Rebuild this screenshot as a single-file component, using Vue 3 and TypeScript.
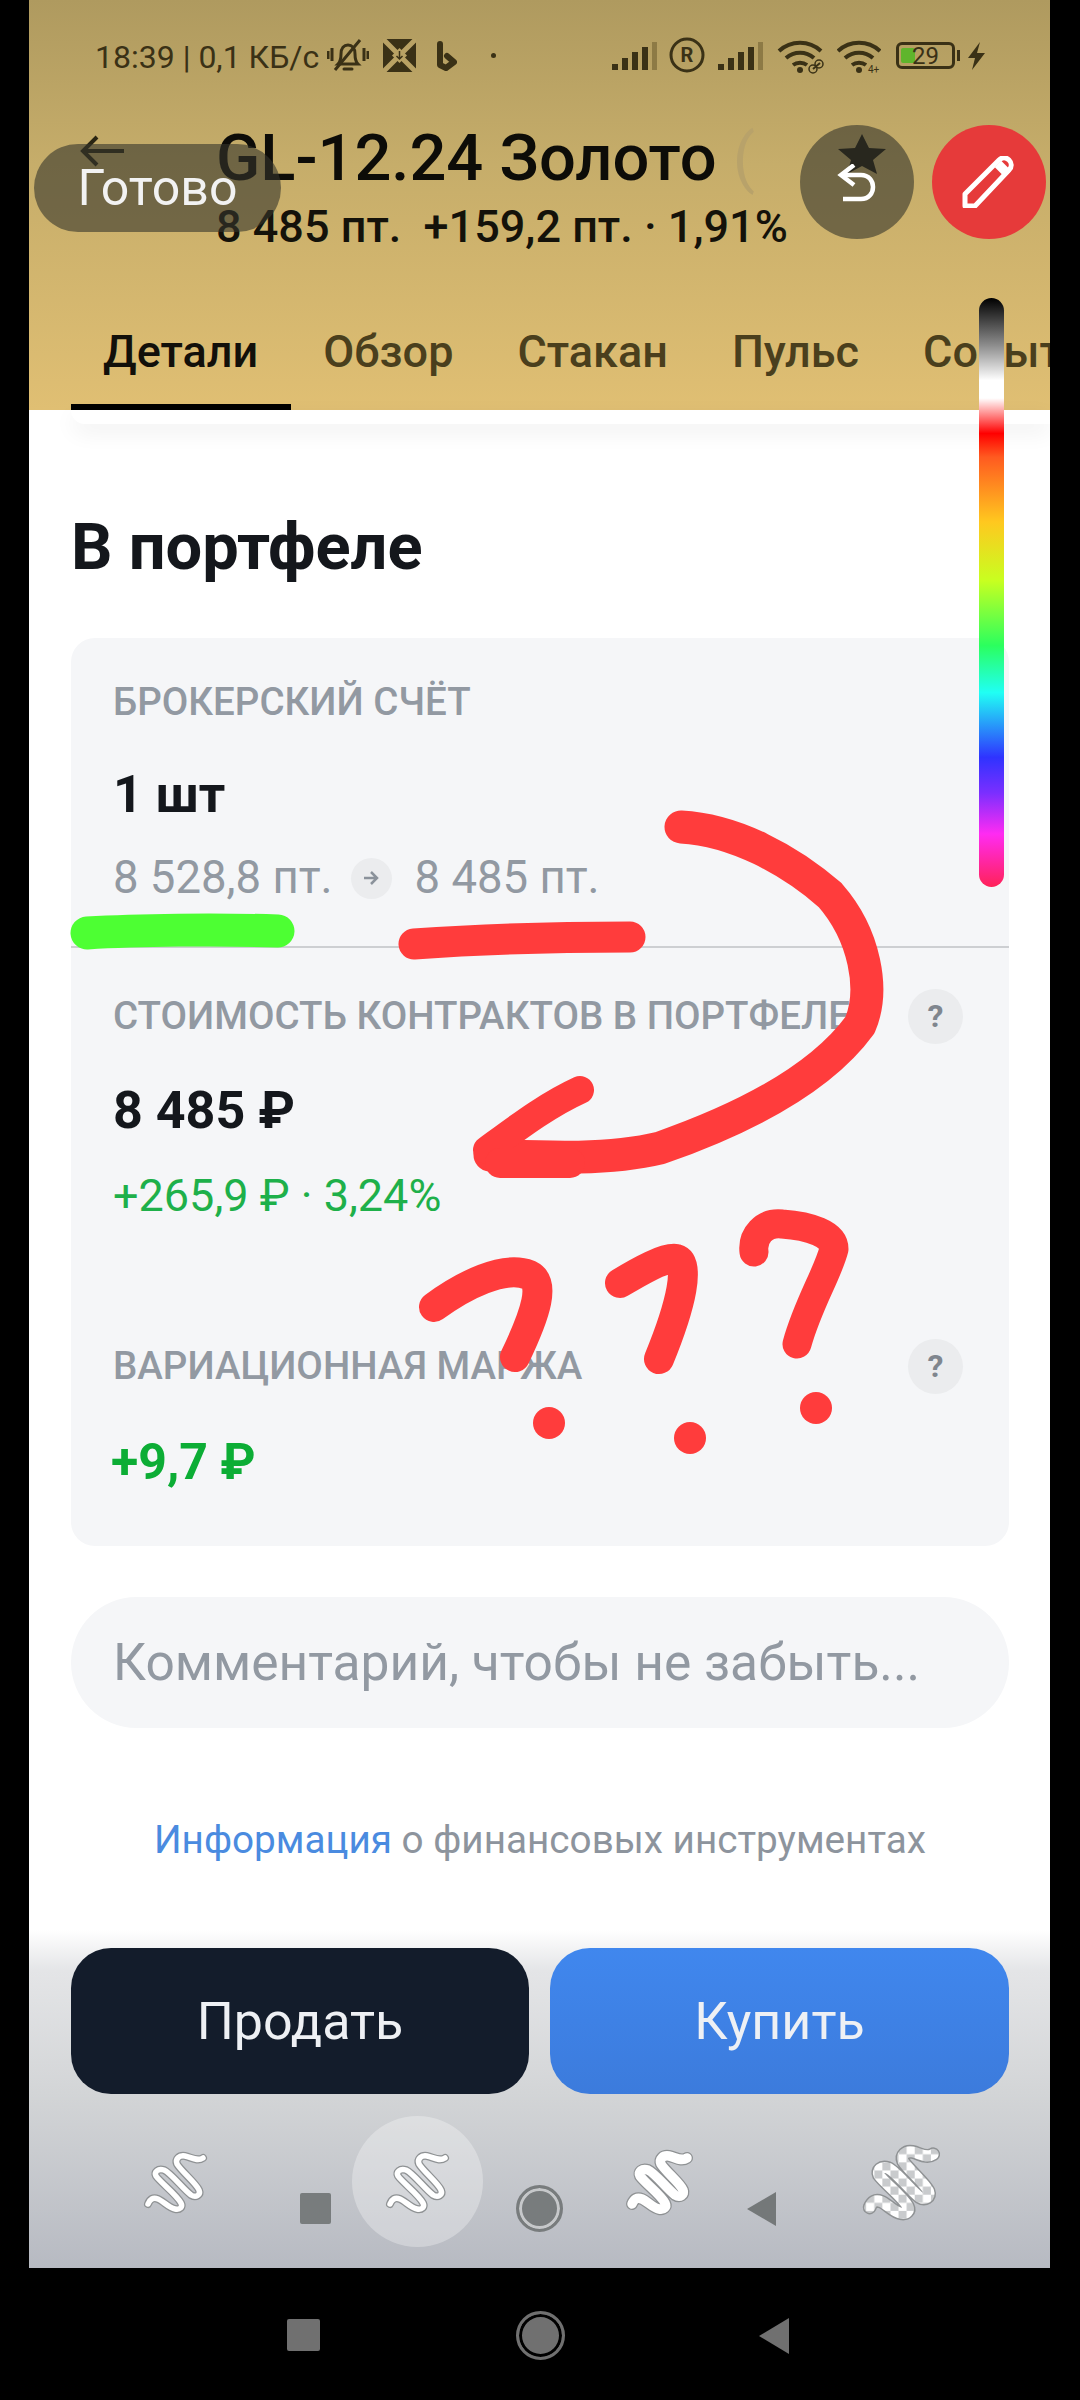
<template>
  <div class="phone">
    <div class="screen">
      <header class="head">
        <div class="status">
          <span class="clock">18:39 | 0,1 КБ/с</span>
          <svg class="st-ic bell" width="42" height="36" viewBox="0 0 42 36" fill="none" stroke="#3a3116" stroke-width="3"><path d="M11 27c2-2 3-5 3-10 0-6 3-9 7-9s7 3 7 9c0 5 1 8 3 10z"/><path d="M17 32h8" stroke-linecap="round"/><path d="M1 14v8M5 11v13M37 11v13M41 14v8M8 33 33 3"/></svg>
          <svg class="st-ic box" width="33" height="33" viewBox="0 0 33 33"><rect width="33" height="33" rx="2" fill="#3a3116"/><path d="M0 0 33 33M33 0 0 33" stroke="#b9a264" stroke-width="5"/><path d="M16.500 9 24 16.500 16.500 24 9 16.500z" fill="#b9a264"/><path d="M16.500 12v7M13.500 17l3 3 3-3" stroke="#3a3116" stroke-width="1.500" fill="none"/></svg>
          <svg class="st-ic bing" width="21" height="30" viewBox="0 0 21 30" fill="none" stroke="#3a3116" stroke-width="6" stroke-linecap="round" stroke-linejoin="round"><path d="M4 3v21l6 3 8-6-7-6"/></svg>
          <i class="st-dot"></i>
          <svg class="st-ic sig" width="46" height="28" viewBox="0 0 46 28"><g fill="#3a3116"><rect y="22" width="6" height="6"/><rect x="10" y="16" width="6" height="12"/><rect x="20" y="10" width="6" height="18"/><rect x="30" y="5" width="6" height="23"/></g><rect x="40" width="5" height="28" fill="#8d7a45"/></svg>
          <svg class="st-ic reg" width="36" height="36" viewBox="0 0 36 36" fill="none"><circle cx="18" cy="18" r="16" stroke="#3a3116" stroke-width="3"/><text x="18" y="25" text-anchor="middle" font-family="Roboto, sans-serif" font-size="20" font-weight="700" fill="#3a3116">R</text></svg>
          <svg class="st-ic sig2" width="46" height="28" viewBox="0 0 46 28"><g fill="#3a3116"><rect y="22" width="6" height="6"/><rect x="10" y="16" width="6" height="12"/><rect x="20" y="10" width="6" height="18"/><rect x="30" y="5" width="6" height="23"/></g><rect x="40" width="5" height="28" fill="#8d7a45"/></svg>
          <svg class="st-ic wifi" width="48" height="34" viewBox="0 0 48 34" fill="none" stroke="#3a3116" stroke-width="4"><path d="M2 11c12-11 30-11 42 0M9 18c8-7 20-7 28 0M16 25c4-3 10-3 14 0"/><circle cx="23" cy="30" r="3" fill="#3a3116" stroke="none"/><path d="M36 29l7-6" stroke-width="2"/><circle cx="42" cy="24" r="4" stroke-width="1.500"/><circle cx="36" cy="29" r="4" stroke-width="1.500"/></svg>
          <svg class="st-ic wifi2" width="44" height="34" viewBox="0 0 44 34" fill="none" stroke="#3a3116" stroke-width="4"><path d="M1 11c12-11 30-11 42 0M8 18c8-7 20-7 28 0M15 25c4-3 10-3 14 0"/><circle cx="22" cy="30" r="3" fill="#3a3116" stroke="none"/><text x="31" y="33" font-family="Roboto, sans-serif" font-size="10" fill="#3a3116" stroke="none">4+</text></svg>
          <div class="batt"><i class="batt-fill"></i><span>29</span></div>
          <i class="batt-nub"></i>
          <svg class="st-ic bolt" width="17" height="28" viewBox="0 0 17 28"><path d="M12 0 0 16h7L4 28l13-17H9z" fill="#3a3116"/></svg>
        </div>
        <div class="title-row">
          <svg class="back" width="44" height="32" viewBox="0 0 44 32" fill="none" stroke="#2a2512" stroke-width="4"><path d="M44 16H3M17 2 3 16l14 14"/></svg>
          <div class="title-col">
            <div class="title">GL-12.24 Золото <span class="paren">(</span></div>
            <div class="sub">8 485 пт.&nbsp; +159,2 пт. · 1,91%</div>
          </div>
        </div>
        <nav class="tabs">
          <span v-for="t in tabs" :key="t" class="tab" :class="{ on: t === 'Детали' }">{{ t }}</span>
        </nav>
      </header>

      <main class="body">
        <div class="shade"></div>
        <h2 class="h">В портфеле</h2>
        <section class="card">
          <div class="block first">
            <div class="label">БРОКЕРСКИЙ СЧЁТ</div>
            <div class="val">1 шт</div>
            <div class="prices">
              <span>8 528,8 пт.</span>
              <i class="arrow-chip">
                <svg width="16" height="14" viewBox="0 0 16 14" fill="none" stroke="#8b929b" stroke-width="2.500"><path d="M1 7h13M8 1l6 6-6 6"/></svg>
              </i>
              <span>8 485 пт.</span>
            </div>
          </div>
          <div class="block second">
            <div class="label-row">
              <div class="label">СТОИМОСТЬ КОНТРАКТОВ В ПОРТФЕЛЕ</div>
              <i class="q">?</i>
            </div>
            <div class="val v2">8 485 ₽</div>
            <div class="gain">+265,9 ₽ · 3,24%</div>
          </div>
          <div class="block third">
            <div class="label-row">
              <div class="label">ВАРИАЦИОННАЯ МАРЖА</div>
              <i class="q">?</i>
            </div>
            <div class="val green">+9,7 ₽</div>
          </div>
        </section>
        <div class="comment">Комментарий, чтобы не забыть...</div>
        <p class="info"><a>Информация</a> о финансовых инструментах</p>
      </main>

      <footer class="foot">
        <div class="actions">
          <button class="btn sell">Продать</button>
          <button class="btn buy">Купить</button>
        </div>
        <div class="tools">
          <div v-for="(t, i) in tools" :key="i" class="tool" :class="{ picked: t.picked }">
            <svg :width="t.size" :height="t.size" viewBox="0 0 90 90" fill="none" stroke-linecap="round" stroke-linejoin="round">
              <defs v-if="t.checker">
                <pattern id="chk" width="14" height="14" patternUnits="userSpaceOnUse">
                  <rect width="14" height="14" fill="#fff"/>
                  <rect width="7" height="7" fill="#c9cbcd"/>
                  <rect x="7" y="7" width="7" height="7" fill="#c9cbcd"/>
                </pattern>
              </defs>
              <path :d="snake" stroke="#8f9294" :stroke-width="t.w + 2.500"/>
              <path :d="snake" :stroke="t.checker ? 'url(#chk)' : '#fff'" :stroke-width="t.w"/>
            </svg>
          </div>
        </div>
      </footer>
    </div>

    <!-- controls of the screenshot editor, lying over the app -->
    <div class="done">Готово</div>
    <svg class="star" width="52" height="40" viewBox="0 0 52 40"><path d="M26 0l7 14 17 1-13 11 4 14-15-8-15 8 4-14L2 15l17-1z" fill="#15130c"/></svg>
    <div class="round undo">
      <svg width="46" height="38" viewBox="0 0 46 38" fill="none" stroke="#fff" stroke-width="4.500"><path d="M20 1 7 11l13 10"/><path d="M7 11h20c8 0 12 6 12 12s-4 12-12 12H9"/></svg>
    </div>
    <div class="round pen">
      <svg width="54" height="52" viewBox="0 0 54 52" fill="none" stroke="#fff" stroke-width="5" stroke-linejoin="round"><path d="M3 50V38L37 4c3-3 7-3 10 0s3 7 0 10L13 50z"/><path d="M36 8l10 10" stroke-width="9"/></svg>
    </div>
    <div class="hue"></div>

    <!-- ghost system keys from the screenshot -->
    <i class="key k-sq ghost"></i>
    <i class="key k-ci ghost"></i>
    <svg class="key k-tr" width="30" height="36" viewBox="0 0 30 36"><path d="M30 1 1 18l29 17z" fill="#747879"/></svg>

    <svg class="marks" width="1080" height="2400" viewBox="0 0 1080 2400" fill="none" stroke-linecap="round" stroke-linejoin="round">
      <path d="M87 933c50-3 130-4 191-2" stroke="#4dff33" stroke-width="33"/>
      <g stroke="#ff3c3c">
        <path d="M414 944c70-5 150-7 216-7" stroke-width="31"/>
        <path d="M681 827C735 830 790 860 830 895C865 935 875 990 860 1025C820 1080 740 1120 660 1148C610 1160 550 1158 490 1155" stroke-width="33"/>
        <path d="M487 1150c30-22 60-45 93-60" stroke-width="28"/>
        <path d="M500 1163h70" stroke-width="30"/>
        <path d="M434 1307c30-22 70-42 95-32 16 8 8 36-14 82" stroke-width="30"/>
        <path d="M620 1283c20-12 45-26 56-24 14 4 6 44-17 100" stroke-width="30"/>
        <path d="M754 1252c-2-16 10-30 28-28 28 2 52 10 52 25-6 24-26 55-37 95" stroke-width="29"/>
      </g>
      <g fill="#ff3c3c">
        <ellipse cx="549" cy="1423" rx="16" ry="16"/>
        <ellipse cx="690" cy="1438" rx="16" ry="16"/>
        <ellipse cx="816" cy="1408" rx="16" ry="16"/>
      </g>
    </svg>

    <div class="sysnav">
      <i class="key s-sq"></i>
      <i class="key s-ci"></i>
      <svg class="key s-tr" width="31" height="38" viewBox="0 0 31 38"><path d="M31 1 1 19l30 18z" fill="#707070"/></svg>
    </div>
  </div>
</template>

<script setup lang="ts">
const tabs = ['Детали', 'Обзор', 'Стакан', 'Пульс', 'События']

const snake =
  'M17 67C19 62 22 60 27 62C32 64 38 71 44 72C49 73 52 70 50 66C46 58 30 46 25 39C23 35 27 31 33 33C40 36 52 52 60 58C65 61 70 58 68 53C65 46 50 34 46 27C44 22 48 18 54 19C60 20 66 25 72 21'

const tools = [
  { w: 5.5, size: 90, picked: false, checker: false },
  { w: 5.5, size: 90, picked: true, checker: false },
  { w: 9.5, size: 90, picked: false, checker: false },
  { w: 9.5, size: 104, picked: false, checker: true },
]
</script>

<style>
html, body { margin: 0; background: #000; }
</style>

<style scoped>
.phone { position: relative; width: 1080px; height: 2400px; background: #000; overflow: hidden; font-family: Roboto, "Noto Sans", sans-serif; }
.screen { width: 1021px; height: 2268px; margin-left: 29px; background: #fff; display: flex; flex-direction: column; overflow: hidden; }

.head { height: 410px; box-sizing: border-box; flex: none; display: flex; flex-direction: column; background: linear-gradient(#af9a5f, #c6ad6a 40%, #e0bf73); }
.status { height: 40px; margin-top: 37px; display: flex; align-items: center; padding-left: 66px; color: #3a3116; font-size: 32px; position: relative; }
.st-ic, .st-dot, .batt, .batt-nub { position: absolute; }
.bell { left: 298px; top: 0; }
.box { left: 354px; top: 2px; }
.bing { left: 407px; top: 4px; }
.st-dot { left: 462px; top: 16px; width: 5px; height: 5px; border-radius: 50%; background: #3a3116; }
.sig { left: 583px; top: 5px; }
.reg { left: 640px; top: 0; }
.sig2 { left: 689px; top: 5px; }
.wifi { left: 748px; top: 3px; }
.wifi2 { left: 808px; top: 3px; }
.batt { left: 867px; top: 5px; width: 59px; height: 27px; box-sizing: border-box; border: 3px solid #3a3116; border-radius: 6px; display: flex; align-items: center; justify-content: center; font-size: 24px; line-height: 1; }
.batt span { position: relative; }
.batt-fill { position: absolute; left: 2px; top: 3px; bottom: 3px; width: 14px; background: #5fb52c; border-radius: 2px; }
.batt-nub { left: 928px; top: 13px; width: 3px; height: 11px; background: #3a3116; }
.bolt { left: 939px; top: 5px; }

.title-row { display: flex; margin-top: 45px; padding-left: 51px; }
.back { margin-top: 13px; flex: none; }
.title-col { margin-left: 92px; }
.title { font-size: 65px; line-height: 72px; color: #0d0c08; white-space: nowrap; font-weight: 500; }
.paren { color: #b8a26a; font-weight: 400; }
.sub { font-size: 45px; line-height: 46px; margin-top: 10px; color: #14120a; white-space: nowrap; font-weight: 500; }

.tabs { margin-top: auto; height: 82px; display: flex; padding-left: 42px; white-space: nowrap; }
.tab { padding: 0 32px; box-sizing: border-box; font-size: 45px; line-height: 47px; color: #4a3f1d; font-weight: 500; }
.tab.on { color: #12100a; border-bottom: 6px solid #000; padding: 0 33px 0 32px; }

.body { flex: 1; padding: 0 41px 0 42px; min-height: 0; }
.shade { height: 14px; margin-right: -41px; border-radius: 0 0 0 18px; box-shadow: 0 8px 22px rgba(0, 0, 0, 0.07); }
.h { margin: 91px 0 0; font-size: 65px; line-height: 64px; font-weight: 700; color: #14171c; }

.card { margin-top: 59px; height: 908px; box-sizing: border-box; background: #f5f6f8; border-radius: 24px; }
.block { padding: 0 42px; box-sizing: border-box; }
.first { height: 310px; padding-top: 44px; border-bottom: 2px solid #cdcfd2; }
.second { height: 390px; padding-top: 40px; }
.label { font-size: 38.5px; line-height: 40px; color: #9299a2; white-space: nowrap; font-weight: 500; }
.label-row { display: flex; align-items: center; justify-content: space-between; height: 56px; }
.val { font-size: 52px; line-height: 56px; font-weight: 700; color: #14171c; margin-top: 45px; }
.prices { display: flex; align-items: center; margin-top: 30px; font-size: 45.5px; line-height: 50px; color: #9299a2; }
.arrow-chip { width: 41px; height: 41px; border-radius: 50%; background: #ebecee; margin: 0 23px 0 18px; display: flex; align-items: center; justify-content: center; }
.q { width: 55px; height: 55px; border-radius: 50%; background: #ebecee; margin-right: 4px; display: flex; align-items: center; justify-content: center; font-style: normal; font-weight: 700; font-size: 32px; color: #80868e; }
.v2 { margin-top: 39px; }
.gain { margin-top: 32px; font-size: 45px; line-height: 50px; color: #1eb04a; }
.green { color: #0cad35; margin-top: 40px; font-size: 50px; margin-left: -2px; }

.comment { margin-top: 51px; height: 131px; border-radius: 66px; background: #f5f6f8; padding-left: 42px; display: flex; align-items: center; font-size: 51.5px; color: #9299a2; white-space: nowrap; }
.info { margin: 88px 0 0; text-align: center; font-size: 38.7px; line-height: 48px; color: #8d949d; white-space: nowrap; }
.info a { color: #4a8be0; }

.foot { height: 338px; flex: none; box-sizing: border-box; background: linear-gradient(#fff, #e4e5e7 12%, #d2d4d6 50%, #b7bac2); padding: 18px 41px 0 42px; }
.actions { display: grid; grid-template-columns: 458px 459px; column-gap: 21px; }
.btn { height: 146px; border: 0; border-radius: 40px; font-family: Roboto, sans-serif; font-size: 52px; color: #eef0f4; }
.sell { background: #131c2b; }
.buy { background: linear-gradient(#4087ee, #3c7bdc); }
.tools { margin: 22px 0 0 39px; display: grid; grid-template-columns: repeat(4, 242px); }
.tool { width: 131px; height: 131px; border-radius: 50%; display: flex; align-items: center; justify-content: center; }
.picked { background: rgba(255, 255, 255, 0.3); }

.done { position: absolute; left: 34px; top: 144px; width: 247px; height: 88px; border-radius: 44px; background: rgba(53, 53, 43, 0.6); color: #f2f2f2; font-size: 50px; display: flex; align-items: center; justify-content: center; }
.star { position: absolute; left: 836px; top: 134px; }
.round { position: absolute; top: 125px; width: 114px; height: 114px; border-radius: 50%; display: flex; align-items: center; justify-content: center; }
.undo { left: 800px; background: rgba(53, 53, 43, 0.6); }
.undo svg { margin-top: 1px; }
.pen { left: 932px; background: #e63a3a; }
.hue { position: absolute; left: 979px; top: 298px; width: 25px; height: 589px; border-radius: 13px; background: linear-gradient(#000 0%, #8c8c8c 8%, #fff 14%, #fff 17%, #ff0000 23%, #ff5a20 27%, #ffc81f 38%, #c8ff20 48%, #2bff5e 59%, #20fff4 67%, #2f33ff 78%, #7a2fff 84%, #ff2bf2 91%, #ff2258 100%); }

.key { position: absolute; display: block; }
.k-sq { left: 300px; top: 2193px; width: 31px; height: 31px; background: #787c7d; border-radius: 2px; }
.k-ci { left: 516px; top: 2185px; width: 47px; height: 47px; box-sizing: border-box; border-radius: 50%; border: 3px solid #787c7d; background: #787c7d; box-shadow: inset 0 0 0 3px #c6c8ca; }
.k-tr { left: 746px; top: 2191px; }
.marks { position: absolute; left: 0; top: 0; pointer-events: none; }
.sysnav { position: absolute; left: 0; top: 2268px; width: 1080px; height: 132px; }
.s-sq { left: 287px; top: 51px; width: 33px; height: 32px; background: #707070; border-radius: 2px; }
.s-ci { left: 516px; top: 43px; width: 49px; height: 49px; box-sizing: border-box; border-radius: 50%; border: 3px solid #707070; background: #707070; box-shadow: inset 0 0 0 3px #000; }
.s-tr { left: 758px; top: 49px; }
</style>
